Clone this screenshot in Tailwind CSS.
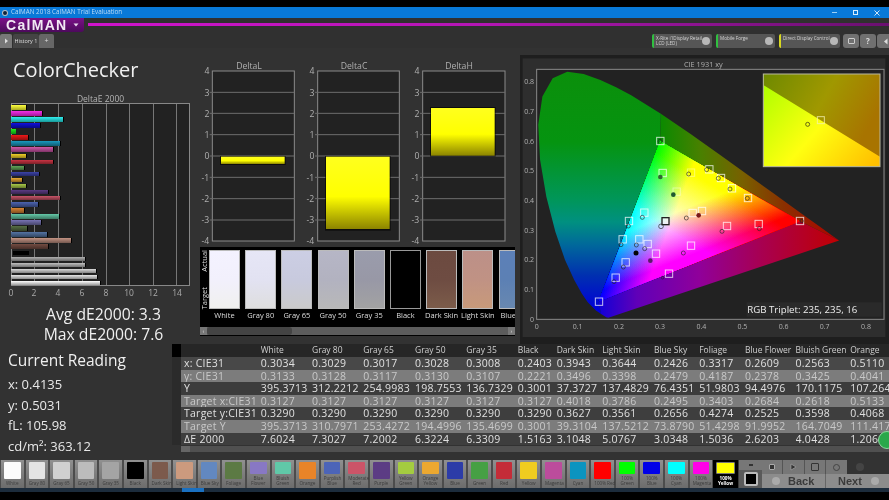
<!DOCTYPE html>
<html><head><meta charset="utf-8"><script src="https://cdn.jsdelivr.net/npm/@tailwindcss/browser@4"></script></head>
<body class="bg-black">
<div class="relative w-[889px] h-[500px] overflow-hidden flex flex-col bg-[#323232] font-['Open_Sans',sans-serif] text-white blur-[0.35px]">

<div class="h-[7px] bg-black shrink-0"></div>

<!-- title bar -->
<div class="h-[11px] shrink-0 bg-[#0879d8] flex items-center text-[#bcdcf6] text-[6.3px] leading-none">
  <div class="w-[6px] h-[6px] rounded-full bg-[#10243c] border border-white/70 ml-[2px] mr-[3px]"></div>
  <span>CalMAN 2018 CalMAN Trial Evaluation</span>
  <div class="ml-auto flex items-center gap-[16px] pr-[9px]">
    <div class="w-[5px] h-px bg-[#9cd0f5]"></div>
    <div class="w-[5px] h-[5px] border border-[#d8eefc]"></div>
    <svg width="6" height="6" viewBox="0 0 6 6"><path d="M0.5 0.5L5.5 5.5M5.5 0.5L0.5 5.5" stroke="#e4f2fc" stroke-width="0.9"/></svg>
  </div>
</div>

<!-- brand bar -->
<div class="h-[16px] shrink-0 bg-[#303030] flex items-start">
  <div class="w-[84px] h-[14px] bg-linear-to-b from-[#7c1088] to-[#4c0a5c] rounded-br-[3px] flex items-center pl-[6px] gap-[6px]">
    <span class="font-['Liberation_Sans'] font-bold text-[14px] leading-none tracking-[1.3px] text-[#f2e8f4]">CalMAN</span>
    <svg width="6" height="4" viewBox="0 0 6 4"><path d="M0.5 0.5H5.5L3 3.5Z" fill="#e8d8ec"/></svg>
  </div>
  <div class="ml-[4px] mt-[5px] flex-1 h-[3px] bg-linear-to-r from-[#d014cc] via-[#b416b4] to-[#6a1070]"></div>
</div>

<!-- tab bar -->
<div class="h-[14px] shrink-0 flex items-stretch bg-[#303030] relative">
  <div class="w-[12px] bg-[#777] rounded-t-[2px] flex items-center justify-center"><svg width="5" height="6" viewBox="0 0 5 6"><path d="M1 0.5L4 3L1 5.5Z" fill="#ddd"/></svg></div>
  <div class="w-[26px] ml-px bg-[#444] rounded-t-[2px] text-[5.5px] text-[#ddd] flex items-center justify-center">History 1</div>
  <div class="w-[15px] bg-[#666] rounded-t-[2px] text-[7px] text-[#ddd] flex items-center justify-center">+</div>
  <div class="ml-auto flex items-stretch gap-[4px] text-[4.6px] leading-[5.5px] text-[#d4d4d4]">
    <div class="w-[60px] bg-[#565656] border-l-2 border-[#30c040] rounded-[2px] flex items-center justify-between pl-[2px] pr-[2px]"><span>X-Rite i1Display Retail<br>LCD (LED)</span><span class="w-[8px] h-[8px] rounded-full bg-[#b8b8b8] shrink-0"></span></div>
    <div class="w-[59px] bg-[#565656] border-l-2 border-[#30c040] rounded-[2px] flex items-center justify-between pl-[2px] pr-[2px]"><span class="self-start pt-[2px]">Mobile Forge</span><span class="w-[8px] h-[8px] rounded-full bg-[#b8b8b8] shrink-0"></span></div>
    <div class="w-[61px] bg-[#565656] border-l-2 border-[#d8d820] rounded-[2px] flex items-center justify-between pl-[2px] pr-[2px]"><span class="self-start pt-[2px]">Direct Display Control</span><span class="w-[8px] h-[8px] rounded-full bg-[#b8b8b8] shrink-0"></span></div>
    <div class="flex gap-px -mr-[4px] -ml-[1px]">
      <div class="w-[16px] bg-[#707070] rounded-[3px] flex items-center justify-center"><span class="w-[7px] h-[6px] rounded-[1px] border border-[#ccc]"></span></div>
      <div class="w-[16px] bg-[#707070] rounded-[3px] flex items-center justify-center text-[8px] font-bold text-[#ddd]">?</div>
      <div class="w-[16px] bg-[#707070] rounded-[3px] flex items-center justify-center"><svg width="5" height="7" viewBox="0 0 5 7"><path d="M4.5 0.5V6.5L1 3.5Z" fill="#ddd"/></svg></div>
    </div>
  </div>
</div>

<!-- upper content -->
<div class="h-[296px] shrink-0 flex">
  <!-- left -->
  <div class="w-[195px] shrink-0 flex flex-col">
    <div class="pl-[13px] pt-[8px] h-[41px] text-[20px] leading-[28px] text-[#f0f0f0]">ColorChecker</div>
    <div class="text-center text-[8.5px] leading-[12px] h-[15px] pl-[6px] pt-[5px] text-[#b4b4b4]">DeltaE 2000</div>
    <div class="relative ml-[11px] w-[179px] h-[183px] bg-[#222] border-t border-r border-b border-[#888]">
      <div class="absolute top-0 bottom-0 left-[23px] w-px bg-[#777]"></div>
      <div class="absolute top-0 bottom-0 left-[47px] w-px bg-[#777]"></div>
      <div class="absolute top-0 bottom-0 left-[71px] w-px bg-[#777]"></div>
      <div class="absolute top-0 bottom-0 left-[95px] w-px bg-[#777]"></div>
      <div class="absolute top-0 bottom-0 left-[118px] w-px bg-[#777]"></div>
      <div class="absolute top-0 bottom-0 left-[142px] w-px bg-[#777]"></div>
      <div class="absolute top-0 bottom-0 left-[165px] w-px bg-[#777]"></div>
      <div class="absolute top-0 bottom-0 left-0 w-px bg-[#888]"></div>
      <div class="relative flex flex-col">
        <div class="h-[6.07px] flex items-center"><div class="w-[15px] h-[4.5px] bg-linear-to-b from-[#ffff40] to-[#a8a820] shadow-[1px_0_0_#000]"></div></div>
        <div class="h-[6.07px] flex items-center"><div class="w-[31px] h-[4.5px] bg-linear-to-b from-[#f430e8] to-[#a01898] shadow-[1px_0_0_#000]"></div></div>
        <div class="h-[6.07px] flex items-center"><div class="w-[52px] h-[4.5px] bg-linear-to-b from-[#30f0f0] to-[#189898] shadow-[1px_0_0_#000]"></div></div>
        <div class="h-[6.07px] flex items-center"><div class="w-[29px] h-[4.5px] bg-linear-to-b from-[#1010e0] to-[#080880] shadow-[1px_0_0_#000]"></div></div>
        <div class="h-[6.07px] flex items-center"><div class="w-[5px] h-[4.5px] bg-linear-to-b from-[#20f020] to-[#109010]"></div></div>
        <div class="h-[6.07px] flex items-center"><div class="w-[17px] h-[4.5px] bg-linear-to-b from-[#f01818] to-[#901010] shadow-[1px_0_0_#000]"></div></div>
        <div class="h-[6.07px] flex items-center"><div class="w-[49px] h-[4.5px] bg-linear-to-b from-[#1a9ac0] to-[#105a70] shadow-[1px_0_0_#000]"></div></div>
        <div class="h-[6.07px] flex items-center"><div class="w-[42px] h-[4.5px] bg-linear-to-b from-[#d058a8] to-[#803468] shadow-[1px_0_0_#000]"></div></div>
        <div class="h-[6.07px] flex items-center"><div class="w-[15px] h-[4.5px] bg-linear-to-b from-[#f0d028] to-[#988418] shadow-[1px_0_0_#000]"></div></div>
        <div class="h-[6.07px] flex items-center"><div class="w-[42px] h-[4.5px] bg-linear-to-b from-[#c83444] to-[#7c2028] shadow-[1px_0_0_#000]"></div></div>
        <div class="h-[6.07px] flex items-center"><div class="w-[13px] h-[4.5px] bg-linear-to-b from-[#60a458] to-[#3a6434] shadow-[1px_0_0_#000]"></div></div>
        <div class="h-[6.07px] flex items-center"><div class="w-[28px] h-[4.5px] bg-linear-to-b from-[#3c44a8] to-[#242868] shadow-[1px_0_0_#000]"></div></div>
        <div class="h-[6.07px] flex items-center"><div class="w-[11px] h-[4.5px] bg-linear-to-b from-[#e8a834] to-[#8c6420] shadow-[1px_0_0_#000]"></div></div>
        <div class="h-[6.07px] flex items-center"><div class="w-[15px] h-[4.5px] bg-linear-to-b from-[#a8c848] to-[#687c2c] shadow-[1px_0_0_#000]"></div></div>
        <div class="h-[6.07px] flex items-center"><div class="w-[37px] h-[4.5px] bg-linear-to-b from-[#5c3c84] to-[#382450] shadow-[1px_0_0_#000]"></div></div>
        <div class="h-[6.07px] flex items-center"><div class="w-[49px] h-[4.5px] bg-linear-to-b from-[#c85468] to-[#78323e] shadow-[1px_0_0_#000]"></div></div>
        <div class="h-[6.07px] flex items-center"><div class="w-[27px] h-[4.5px] bg-linear-to-b from-[#4c64b0] to-[#2e3c6a] shadow-[1px_0_0_#000]"></div></div>
        <div class="h-[6.07px] flex items-center"><div class="w-[13px] h-[4.5px] bg-linear-to-b from-[#d88434] to-[#84501f] shadow-[1px_0_0_#000]"></div></div>
        <div class="h-[6.07px] flex items-center"><div class="w-[48px] h-[4.5px] bg-linear-to-b from-[#64c8a8] to-[#3c7864] shadow-[1px_0_0_#000]"></div></div>
        <div class="h-[6.07px] flex items-center"><div class="w-[30px] h-[4.5px] bg-linear-to-b from-[#7874b4] to-[#48466c] shadow-[1px_0_0_#000]"></div></div>
        <div class="h-[6.07px] flex items-center"><div class="w-[16px] h-[4.5px] bg-linear-to-b from-[#566e44] to-[#344228] shadow-[1px_0_0_#000]"></div></div>
        <div class="h-[6.07px] flex items-center"><div class="w-[36px] h-[4.5px] bg-linear-to-b from-[#5474a4] to-[#324662] shadow-[1px_0_0_#000]"></div></div>
        <div class="h-[6.07px] flex items-center"><div class="w-[60px] h-[4.5px] bg-linear-to-b from-[#c49484] to-[#765950] shadow-[1px_0_0_#000]"></div></div>
        <div class="h-[6.07px] flex items-center"><div class="w-[37px] h-[4.5px] bg-linear-to-b from-[#744c42] to-[#462e28] shadow-[1px_0_0_#000]"></div></div>
        <div class="h-[6.07px] flex items-center"><div class="ml-[2px] w-[16px] h-[4.5px] bg-black"></div></div>
        <div class="h-[6.07px] flex items-center"><div class="w-[74px] h-[4.5px] bg-linear-to-b from-[#b0b0b0] to-[#6a6a6a] shadow-[1px_0_0_#000]"></div></div>
        <div class="h-[6.07px] flex items-center"><div class="w-[74px] h-[4.5px] bg-linear-to-b from-[#c0c0c0] to-[#747474] shadow-[1px_0_0_#000]"></div></div>
        <div class="h-[6.07px] flex items-center"><div class="w-[85px] h-[4.5px] bg-linear-to-b from-[#dadada] to-[#848484] shadow-[1px_0_0_#000]"></div></div>
        <div class="h-[6.07px] flex items-center"><div class="w-[86px] h-[4.5px] bg-linear-to-b from-[#e8e8e8] to-[#8c8c8c] shadow-[1px_0_0_#000]"></div></div>
        <div class="h-[6.07px] flex items-center"><div class="w-[89px] h-[4.5px] bg-linear-to-b from-[#ffffff] to-[#a0a0a0] shadow-[1px_0_0_#000]"></div></div>
      </div>
    </div>
    <div class="relative ml-[11px] h-[12px] text-[8.5px] leading-[12px] text-[#aaa] mt-[1px]">
      <span class="absolute left-0 -translate-x-1/2">0</span>
      <span class="absolute left-[23px] -translate-x-1/2">2</span>
      <span class="absolute left-[47px] -translate-x-1/2">4</span>
      <span class="absolute left-[71px] -translate-x-1/2">6</span>
      <span class="absolute left-[95px] -translate-x-1/2">8</span>
      <span class="absolute left-[118px] -translate-x-1/2">10</span>
      <span class="absolute left-[142px] -translate-x-1/2">12</span>
      <span class="absolute left-[166px] -translate-x-1/2">14</span>
    </div>
    <div class="text-center text-[15.7px] leading-[20px] text-[#f0f0f0] pl-[12px] pt-[5px]">Avg dE2000: 3.3</div>
    <div class="text-center text-[15.7px] leading-[20px] text-[#f0f0f0] pl-[12px]">Max dE2000: 7.6</div>
  </div>

  <!-- center -->
  <div class="w-[325px] shrink-0 flex flex-col">
    <svg class="mt-[12px] block shrink-0" width="330" height="190" viewBox="0 0 990 570">
      <defs>
        <linearGradient id="yb" x1="0" y1="0" x2="0" y2="1"><stop offset="0" stop-color="#ffff1e"/><stop offset="0.55" stop-color="#ffff00"/><stop offset="1" stop-color="#8c8400"/></linearGradient>
      </defs>
      <g font-size="26" fill="#b0b0b0" text-anchor="end">
        <text x="162" y="27" text-anchor="middle">DeltaL</text><text x="477" y="27" text-anchor="middle">DeltaC</text><text x="792" y="27" text-anchor="middle">DeltaH</text>
        <text x="43" y="43">4</text><text x="43" y="107">3</text><text x="43" y="170">2</text><text x="43" y="234">1</text><text x="43" y="298">0</text><text x="43" y="362">-1</text><text x="43" y="426">-2</text><text x="43" y="490">-3</text><text x="43" y="553">-4</text>
        <text x="358" y="43">4</text><text x="358" y="107">3</text><text x="358" y="170">2</text><text x="358" y="234">1</text><text x="358" y="298">0</text><text x="358" y="362">-1</text><text x="358" y="426">-2</text><text x="358" y="490">-3</text><text x="358" y="553">-4</text>
        <text x="673" y="43">4</text><text x="673" y="107">3</text><text x="673" y="170">2</text><text x="673" y="234">1</text><text x="673" y="298">0</text><text x="673" y="362">-1</text><text x="673" y="426">-2</text><text x="673" y="490">-3</text><text x="673" y="553">-4</text>
      </g>
      <g fill="#222" stroke="#8a8a8a" stroke-width="3">
        <rect x="52" y="33" width="246" height="510"/><rect x="368" y="33" width="245" height="510"/><rect x="683" y="33" width="247" height="510"/>
      </g>
      <path stroke="#6e6e6e" stroke-width="3" d="M44 97H298M44 160H298M44 224H298M44 288H298M44 352H298M44 416H298M44 480H298M360 97H613M360 160H613M360 224H613M360 288H613M360 352H613M360 416H613M360 480H613M675 97H930M675 160H930M675 224H930M675 288H930M675 352H930M675 416H930M675 480H930"/>
      <rect x="75" y="288" width="197" height="27" fill="#000" fill-opacity="0.6"/><rect x="78" y="290" width="191" height="22" fill="url(#yb)"/>
      <rect x="390" y="288" width="197" height="224" fill="#000" fill-opacity="0.6"/><rect x="393" y="290" width="191" height="217" fill="url(#yb)"/>
      <rect x="705" y="141" width="197" height="149" fill="#000" fill-opacity="0.6"/><rect x="708" y="144" width="191" height="143" fill="url(#yb)"/>
    </svg>
    <!-- swatches -->
    <div class="-mt-[3px] ml-[5px] w-[315px] h-[89px] bg-black relative overflow-hidden flex flex-col">
      <div class="flex h-[80px] pt-[3px]">
        <div class="w-[9px] shrink-0 h-[59px] flex flex-col justify-between items-center text-[7.5px] text-[#ddd] leading-none">
          <span class="[writing-mode:vertical-rl] rotate-180 ml-[1px]">Actual</span>
          <span class="[writing-mode:vertical-rl] rotate-180 ml-[1px]">Target</span>
        </div>
        <div class="flex gap-[5.2px] text-[7.5px] leading-[13px] text-[#ddd] text-center whitespace-nowrap">
          <div class="w-[31px]"><div class="h-[59px] border border-[#bbb] bg-linear-to-b from-[#f4f2ff] via-[#f2f0fc] to-[#f0f0ee]"></div><div class="flex justify-center">White</div></div>
          <div class="w-[31px]"><div class="h-[59px] border border-[#bbb] bg-linear-to-b from-[#e6e6f6] via-[#e2e2f2] to-[#dedede]"></div><div class="flex justify-center">Gray 80</div></div>
          <div class="w-[31px]"><div class="h-[59px] border border-[#bbb] bg-linear-to-b from-[#cccee4] via-[#c8cade] to-[#cacaca]"></div><div class="flex justify-center">Gray 65</div></div>
          <div class="w-[31px]"><div class="h-[59px] border border-[#bbb] bg-linear-to-b from-[#b6b6c6] via-[#b2b2c0] to-[#b8b8b8]"></div><div class="flex justify-center">Gray 50</div></div>
          <div class="w-[31px]"><div class="h-[59px] border border-[#bbb] bg-linear-to-b from-[#9a9cac] via-[#9898a6] to-[#a2a2a2]"></div><div class="flex justify-center">Gray 35</div></div>
          <div class="w-[31px]"><div class="h-[59px] border border-[#999] bg-black"></div><div class="flex justify-center">Black</div></div>
          <div class="w-[31px]"><div class="h-[59px] border border-[#bbb] bg-linear-to-b from-[#6c4a40] via-[#6e4c42] to-[#7c5c4a]"></div><div class="flex justify-center">Dark Skin</div></div>
          <div class="w-[31px]"><div class="h-[59px] border border-[#bbb] bg-linear-to-b from-[#bc9088] via-[#c09284] to-[#c89a7a]"></div><div class="flex justify-center">Light Skin</div></div>
          <div class="w-[31px]"><div class="h-[59px] border border-[#bbb] bg-linear-to-b from-[#5c80b8] via-[#5c80b4] to-[#6888b0]"></div><div class="flex justify-start pl-[2px]">Blue</div></div>
        </div>
      </div>
      <div class="absolute left-0 right-0 bottom-[1px] h-[8px] bg-[#5c5c5c] flex items-center">
        <div class="w-[7px] h-full bg-[#777] text-[6px] leading-[8px] text-center text-[#ddd]">‹</div>
        <div class="w-[85px] h-full bg-[#444] rounded-[3px]"></div>
        <div class="ml-auto w-[7px] h-full bg-[#777] text-[6px] leading-[8px] text-center text-[#ddd]">›</div>
      </div>
    </div>
  </div>

  <!-- CIE -->
  <div class="flex-1 min-w-0">
    <svg class="mt-[7px] block" width="369" height="290" viewBox="0 0 1107 870">
      <defs>
        <linearGradient id="lf" x1="0" y1="1" x2="0" y2="0">
          <stop offset="0" stop-color="#0b8f0b"/><stop offset="0.29" stop-color="#059410"/><stop offset="0.53" stop-color="#00965a"/><stop offset="0.62" stop-color="#009080"/><stop offset="0.71" stop-color="#006a9a"/><stop offset="0.84" stop-color="#0030b0"/><stop offset="0.98" stop-color="#0000d8"/>
        </linearGradient>
        <linearGradient id="tr" x1="0" y1="0" x2="1" y2="0">
          <stop offset="0" stop-color="#0a8a00"/><stop offset="0.23" stop-color="#4a8000"/><stop offset="0.46" stop-color="#786000"/><stop offset="0.69" stop-color="#8a3000"/><stop offset="1" stop-color="#b00000"/>
        </linearGradient>
        <linearGradient id="bt" x1="0" y1="0" x2="1" y2="0">
          <stop offset="0" stop-color="#1000d8"/><stop offset="0.16" stop-color="#6000b8"/><stop offset="0.42" stop-color="#90009a"/><stop offset="0.68" stop-color="#a80050"/><stop offset="1" stop-color="#c00000"/>
        </linearGradient>
        <linearGradient id="gr" gradientUnits="userSpaceOnUse" x1="840" y1="499" x2="393.8" y2="327.3"><stop offset="0" stop-color="#f00"/><stop offset="1" stop-color="#000"/></linearGradient>
        <linearGradient id="gg" gradientUnits="userSpaceOnUse" x1="420.5" y1="258" x2="560.8" y2="610.2"><stop offset="0" stop-color="#0f0"/><stop offset="1" stop-color="#000"/></linearGradient>
        <linearGradient id="gb" gradientUnits="userSpaceOnUse" x1="235" y1="740" x2="489.2" y2="297.5"><stop offset="0" stop-color="#00f"/><stop offset="1" stop-color="#000"/></linearGradient>
        <filter id="boost" color-interpolation-filters="sRGB" x="0" y="0" width="100%" height="100%">
          <feComponentTransfer><feFuncR type="linear" slope="4" intercept="0"/><feFuncG type="linear" slope="2.8" intercept="-0.2"/><feFuncB type="linear" slope="2.8" intercept="-0.2"/></feComponentTransfer>
        </filter>
        <linearGradient id="inA" x1="0" y1="0" x2="1" y2="0.4"><stop offset="0" stop-color="#6e8a00"/><stop offset="0.55" stop-color="#a09800"/><stop offset="1" stop-color="#a87400"/></linearGradient>
        <linearGradient id="inB" x1="0" y1="0.2" x2="1" y2="0.9"><stop offset="0" stop-color="#b4ff00"/><stop offset="0.5" stop-color="#ffff10"/><stop offset="1" stop-color="#ffc000"/></linearGradient>
      </defs>
      <rect width="1107" height="870" fill="#1e1e1e"/>
      <rect x="8" y="10" width="1088" height="836" fill="#2e2e2e"/>
      <rect x="50" y="43" width="1042" height="750" fill="#222" stroke="#8a8a8a" stroke-width="3"/>
      <g transform="translate(50 793) scale(1235 -891)">
        <polygon fill="url(#lf)" points=".15,.06 .1566,.0177 .144,.0297 .1241,.0578 .1096,.0868 .0913,.1327 .0687,.2007 .0454,.295 .0235,.4127 .0082,.5384 .0039,.6548 .0139,.7502 .0389,.812 .0743,.8338 .1142,.8262 .1547,.8059 .1929,.7816 .2296,.7543 .3016,.6923 .3,.6"/>
        <polygon fill="url(#tr)" points=".3,.6 .3016,.6923 .3731,.6245 .4441,.5547 .5125,.4866 .5752,.4242 .627,.3725 .6658,.334 .6915,.3083 .719,.2809 .7347,.2653 .64,.33"/>
        <polygon fill="url(#bt)" points=".15,.06 .1566,.0177 .1689,.0069 .1741,.005 .7347,.2653 .64,.33"/>
      </g>
      <g filter="url(#boost)" class="isolate">
        <polygon points="840,499 420.5,258 235,740" fill="#000"/>
        <polygon class="mix-blend-screen" points="840,499 420.5,258 235,740" fill="url(#gr)"/>
        <polygon class="mix-blend-screen" points="840,499 420.5,258 235,740" fill="url(#gg)"/>
        <polygon class="mix-blend-screen" points="840,499 420.5,258 235,740" fill="url(#gb)"/>
      </g>
      <!-- inset -->
      <rect x="730" y="57" width="350" height="278" fill="url(#inB)"/>
      <polygon points="730,57 1080,57 1080,305 730,90" fill="url(#inA)"/>
      <rect x="730" y="57" width="350" height="278" fill="none" stroke="#b8b8a0" stroke-width="3"/>
      <rect x="892" y="185" width="21" height="21" fill="none" stroke="#f4f0b0" stroke-opacity="0.8" stroke-width="3"/>
      <circle cx="863" cy="208" r="6" fill="none" stroke="#4a4a10" stroke-width="2.5"/>
      <!-- targets -->
      <g fill="none" stroke="#fff" stroke-width="3" stroke-opacity="0.75">
        <rect x="410" y="247" width="22" height="22"/><rect x="417" y="343" width="22" height="22"/><rect x="502" y="342" width="22" height="22" stroke-opacity="0.4"/><rect x="557" y="332" width="22" height="22"/><rect x="592" y="358" width="22" height="22"/><rect x="625" y="389" width="22" height="22"/><rect x="673" y="418" width="22" height="22"/><rect x="459" y="399" width="22" height="22" stroke-opacity="0.4"/><rect x="535" y="457" width="22" height="22"/><rect x="507" y="463" width="22" height="22"/><rect x="362" y="462" width="22" height="22"/><rect x="316" y="487" width="22" height="22"/><rect x="610" y="502" width="22" height="22"/><rect x="705" y="496" width="22" height="22"/><rect x="829" y="487" width="22" height="22"/><rect x="297" y="542" width="22" height="22"/><rect x="347" y="542" width="22" height="22"/><rect x="372" y="556" width="22" height="22"/><rect x="502" y="561" width="22" height="22"/><rect x="397" y="585" width="22" height="22"/><rect x="306" y="611" width="22" height="22"/><rect x="436" y="645" width="22" height="22"/><rect x="276" y="657" width="22" height="22"/><rect x="226" y="729" width="22" height="22"/>
      </g>
      <rect x="426" y="488" width="21" height="21" fill="#fff" fill-opacity="0.5" stroke="#222" stroke-width="4"/>
      <!-- actual -->
      <g fill="none" stroke="#222" stroke-width="2.5" stroke-opacity="0.75">
        <circle cx="420" cy="259" r="6"/><circle cx="506" cy="357" r="6"/><circle cx="560" cy="344" r="6"/><circle cx="595" cy="370" r="6"/><circle cx="630" cy="402" r="6"/><circle cx="682" cy="430" r="6"/><circle cx="499" cy="489" r="6"/><circle cx="367" cy="487" r="6"/><circle cx="325" cy="513" r="6"/><circle cx="423" cy="514" r="7"/><circle cx="606" cy="529" r="6"/><circle cx="718" cy="521" r="6"/><circle cx="845" cy="498" r="5"/><circle cx="303" cy="569" r="6"/><circle cx="349" cy="570" r="6"/><circle cx="374" cy="581" r="6"/><circle cx="490" cy="594" r="6"/><circle cx="310" cy="636" r="6"/><circle cx="428" cy="668" r="4"/><circle cx="282" cy="680" r="6"/>
      </g>
      <circle cx="421" cy="366" r="7" fill="#2f6a2f"/><circle cx="460" cy="419" r="7" fill="#1f5a2f"/><circle cx="536" cy="481" r="7" fill="#7a1a1a"/><circle cx="348" cy="594" r="7.5" fill="#050505"/><circle cx="391" cy="617" r="7" fill="#5a1a6a"/>
      <!-- triplet -->
      <rect x="680" y="742" width="405" height="43" fill="#2a2a2a"/>
      <text x="682" y="773" font-size="29" fill="#eee">RGB Triplet: 235, 235, 16</text>
      <!-- axes -->
      <text x="550" y="37" font-size="22" fill="#b0b0b0" text-anchor="middle">CIE 1931 xy</text>
      <g font-size="21" fill="#b0b0b0" text-anchor="middle">
        <text x="50" y="822">0</text><text x="173" y="822">0.1</text><text x="297" y="822">0.2</text><text x="420" y="822">0.3</text><text x="544" y="822">0.4</text><text x="667" y="822">0.5</text><text x="791" y="822">0.6</text><text x="914" y="822">0.7</text><text x="1038" y="822">0.8</text>
      </g>
      <g font-size="21" fill="#b0b0b0" text-anchor="end">
        <text x="42" y="88">0.8</text><text x="42" y="177">0.7</text><text x="42" y="266">0.6</text><text x="42" y="355">0.5</text><text x="42" y="444">0.4</text><text x="42" y="533">0.3</text><text x="42" y="622">0.2</text><text x="42" y="711">0.1</text><text x="42" y="800">0</text>
      </g>
    </svg>
  </div>
</div>

<!-- lower content -->
<div class="h-[116px] shrink-0 flex">
  <div class="w-[172px] shrink-0 pl-[8px] text-[#f0f0f0]">
    <div class="text-[15.5px] leading-[22px] pt-[5px] h-[30px]">Current Reading</div>
    <div class="text-[13px] leading-[20.5px] text-[#e8e8e8]">
      <div>x: 0.4135</div>
      <div>y: 0.5031</div>
      <div>fL: 105.98</div>
      <div>cd/m²: 363.12</div>
    </div>
  </div>
  <div class="w-[9px] shrink-0 flex flex-col">
    <div class="h-[13px] bg-black"></div>
    <div class="h-[88px] bg-[#2b2b2b]"></div>
  </div>
  <div class="flex-1 min-w-0 overflow-hidden">
    <table class="table-fixed w-[708px] border-collapse text-[10.5px] tracking-[0.25px] text-[#e0e0e0]">
      <colgroup><col class="w-[79.7px]"><col class="w-[51.3px]"><col class="w-[51.3px]"><col class="w-[51.7px]"><col class="w-[51.3px]"><col class="w-[51.4px]"><col class="w-[39px]"><col class="w-[45.6px]"><col class="w-[51.7px]"><col class="w-[45.3px]"><col class="w-[45.7px]"><col class="w-[50.7px]"><col class="w-[54.6px]"><col class="w-[38.7px]"></colgroup>
      <thead>
        <tr class="h-[13px] bg-[#262626] text-[8.5px] tracking-normal text-[#cfcfcf] text-left font-normal [&>th]:font-normal [&>th]:p-0 [&>th]:whitespace-nowrap [&>th]:overflow-hidden [&>th]:leading-none">
          <th></th><th>White</th><th>Gray 80</th><th>Gray 65</th><th>Gray 50</th><th>Gray 35</th><th>Black</th><th>Dark Skin</th><th>Light Skin</th><th>Blue Sky</th><th>Foliage</th><th>Blue Flower</th><th>Bluish Green</th><th>Orange</th>
        </tr>
      </thead>
      <tbody class="[&_td]:p-0 [&_td]:leading-none [&_td]:whitespace-nowrap [&_td]:overflow-hidden [&_tr]:h-[12.6px] [&_td:first-child]:pl-[3px]">
        <tr class="bg-[#484848]"><td>x: CIE31</td><td>0.3034</td><td>0.3029</td><td>0.3017</td><td>0.3028</td><td>0.3008</td><td>0.2403</td><td>0.3943</td><td>0.3644</td><td>0.2426</td><td>0.3317</td><td>0.2609</td><td>0.2563</td><td>0.5110</td></tr>
        <tr class="bg-[#7c7c7c] text-[#c8c8c8]"><td>y: CIE31</td><td>0.3133</td><td>0.3128</td><td>0.3117</td><td>0.3130</td><td>0.3107</td><td>0.2221</td><td>0.3496</td><td>0.3398</td><td>0.2479</td><td>0.4187</td><td>0.2378</td><td>0.3425</td><td>0.4041</td></tr>
        <tr class="bg-[#3c3c3c]"><td>Y</td><td>395.3713</td><td>312.2212</td><td>254.9983</td><td>198.7553</td><td>136.7329</td><td>0.3001</td><td>37.3727</td><td>137.4829</td><td>76.4351</td><td>51.9803</td><td>94.4976</td><td>170.1175</td><td>107.264</td></tr>
        <tr class="bg-[#7c7c7c] text-[#c8c8c8]"><td>Target x:CIE31</td><td>0.3127</td><td>0.3127</td><td>0.3127</td><td>0.3127</td><td>0.3127</td><td>0.3127</td><td>0.4018</td><td>0.3786</td><td>0.2495</td><td>0.3403</td><td>0.2684</td><td>0.2618</td><td>0.5133</td></tr>
        <tr class="bg-[#3e3e3e]"><td>Target y:CIE31</td><td>0.3290</td><td>0.3290</td><td>0.3290</td><td>0.3290</td><td>0.3290</td><td>0.3290</td><td>0.3627</td><td>0.3561</td><td>0.2656</td><td>0.4274</td><td>0.2525</td><td>0.3598</td><td>0.4068</td></tr>
        <tr class="bg-[#7c7c7c] text-[#c8c8c8]"><td>Target Y</td><td>395.3713</td><td>310.7971</td><td>253.4272</td><td>194.4996</td><td>135.4699</td><td>0.3001</td><td>39.3104</td><td>137.5212</td><td>73.8790</td><td>51.4298</td><td>91.9952</td><td>164.7049</td><td>111.417</td></tr>
        <tr class="bg-[#3e3e3e]"><td>ΔE 2000</td><td>7.6024</td><td>7.3027</td><td>7.2002</td><td>6.3224</td><td>6.3309</td><td>1.5163</td><td>3.1048</td><td>5.0767</td><td>3.0348</td><td>1.5036</td><td>2.6203</td><td>4.0428</td><td>1.2066</td></tr>
      </tbody>
    </table>
    <div class="h-[6px] mt-px bg-[#444] flex"><div class="w-[9px] bg-[#666]"></div><div class="flex-1 bg-[#505050]"></div></div>
  </div>
</div>

<div class="absolute left-[878px] top-[431px] w-[18px] h-[18px] rounded-full bg-[#2aa84a] border border-[#8fd8a0]"></div>

<!-- bottom strip -->
<div class="h-[28px] shrink-0 flex bg-[#3a3a3a]">
  <div class="w-[739px] shrink-0 flex text-[4.6px] leading-[5px] text-[#3c3c3c] text-center">
    <div class="w-[24.6px] shrink-0 px-[3px] pt-[2px] border-x border-[#4c4c4c] bg-linear-to-b from-[#909090] to-[#6c6c6c]"><div class="h-[17px] bg-[#fbfbfb] rounded-[1px]"></div><div class="mt-[2px] whitespace-nowrap">White</div></div>
    <div class="w-[24.6px] shrink-0 px-[3px] pt-[2px] border-x border-[#4c4c4c] bg-linear-to-b from-[#909090] to-[#6c6c6c]"><div class="h-[17px] bg-[#e4e4e4] rounded-[1px]"></div><div class="mt-[2px] whitespace-nowrap">Gray 80</div></div>
    <div class="w-[24.6px] shrink-0 px-[3px] pt-[2px] border-x border-[#4c4c4c] bg-linear-to-b from-[#909090] to-[#6c6c6c]"><div class="h-[17px] bg-[#d0d0d0] rounded-[1px]"></div><div class="mt-[2px] whitespace-nowrap">Gray 65</div></div>
    <div class="w-[24.6px] shrink-0 px-[3px] pt-[2px] border-x border-[#4c4c4c] bg-linear-to-b from-[#909090] to-[#6c6c6c]"><div class="h-[17px] bg-[#bcbcbc] rounded-[1px]"></div><div class="mt-[2px] whitespace-nowrap">Gray 50</div></div>
    <div class="w-[24.6px] shrink-0 px-[3px] pt-[2px] border-x border-[#4c4c4c] bg-linear-to-b from-[#909090] to-[#6c6c6c]"><div class="h-[17px] bg-[#a4a4a4] rounded-[1px]"></div><div class="mt-[2px] whitespace-nowrap">Gray 35</div></div>
    <div class="w-[24.6px] shrink-0 px-[3px] pt-[2px] border-x border-[#4c4c4c] bg-linear-to-b from-[#909090] to-[#6c6c6c]"><div class="h-[17px] bg-[#000] rounded-[1px]"></div><div class="mt-[2px] whitespace-nowrap">Black</div></div>
    <div class="w-[24.6px] shrink-0 px-[3px] pt-[2px] border-x border-[#4c4c4c] bg-linear-to-b from-[#909090] to-[#6c6c6c]"><div class="h-[17px] bg-[#7c5a4c] rounded-[1px]"></div><div class="mt-[2px] whitespace-nowrap">Dark Skin</div></div>
    <div class="w-[24.6px] shrink-0 px-[3px] pt-[2px] border-x border-[#4c4c4c] bg-linear-to-b from-[#909090] to-[#6c6c6c]"><div class="h-[17px] bg-[#cc9a7e] rounded-[1px]"></div><div class="mt-[2px] whitespace-nowrap">Light Skin</div></div>
    <div class="w-[24.6px] shrink-0 px-[3px] pt-[2px] border-x border-[#4c4c4c] bg-linear-to-b from-[#909090] to-[#6c6c6c]"><div class="h-[17px] bg-[#6288c0] rounded-[1px]"></div><div class="mt-[2px] whitespace-nowrap">Blue Sky</div></div>
    <div class="w-[24.6px] shrink-0 px-[3px] pt-[2px] border-x border-[#4c4c4c] bg-linear-to-b from-[#909090] to-[#6c6c6c]"><div class="h-[17px] bg-[#5c7a44] rounded-[1px]"></div><div class="mt-[2px] whitespace-nowrap">Foliage</div></div>
    <div class="w-[24.6px] shrink-0 px-[3px] pt-[2px] border-x border-[#4c4c4c] bg-linear-to-b from-[#909090] to-[#6c6c6c]"><div class="h-[12px] bg-[#8878c4] rounded-[1px]"></div><div class="mt-[2px]">Blue Flower</div></div>
    <div class="w-[24.6px] shrink-0 px-[3px] pt-[2px] border-x border-[#4c4c4c] bg-linear-to-b from-[#909090] to-[#6c6c6c]"><div class="h-[12px] bg-[#60c8a8] rounded-[1px]"></div><div class="mt-[2px]">Bluish Green</div></div>
    <div class="w-[24.6px] shrink-0 px-[3px] pt-[2px] border-x border-[#4c4c4c] bg-linear-to-b from-[#909090] to-[#6c6c6c]"><div class="h-[17px] bg-[#e88428] rounded-[1px]"></div><div class="mt-[2px] whitespace-nowrap">Orange</div></div>
    <div class="w-[24.6px] shrink-0 px-[3px] pt-[2px] border-x border-[#4c4c4c] bg-linear-to-b from-[#909090] to-[#6c6c6c]"><div class="h-[12px] bg-[#4c64b8] rounded-[1px]"></div><div class="mt-[2px]">Purplish Blue</div></div>
    <div class="w-[24.6px] shrink-0 px-[3px] pt-[2px] border-x border-[#4c4c4c] bg-linear-to-b from-[#909090] to-[#6c6c6c]"><div class="h-[12px] bg-[#cc5468] rounded-[1px]"></div><div class="mt-[2px]">Moderate Red</div></div>
    <div class="w-[24.6px] shrink-0 px-[3px] pt-[2px] border-x border-[#4c4c4c] bg-linear-to-b from-[#909090] to-[#6c6c6c]"><div class="h-[17px] bg-[#5c3c84] rounded-[1px]"></div><div class="mt-[2px] whitespace-nowrap">Purple</div></div>
    <div class="w-[24.6px] shrink-0 px-[3px] pt-[2px] border-x border-[#4c4c4c] bg-linear-to-b from-[#909090] to-[#6c6c6c]"><div class="h-[12px] bg-[#a4cc40] rounded-[1px]"></div><div class="mt-[2px]">Yellow Green</div></div>
    <div class="w-[24.6px] shrink-0 px-[3px] pt-[2px] border-x border-[#4c4c4c] bg-linear-to-b from-[#909090] to-[#6c6c6c]"><div class="h-[12px] bg-[#eca830] rounded-[1px]"></div><div class="mt-[2px]">Orange Yellow</div></div>
    <div class="w-[24.6px] shrink-0 px-[3px] pt-[2px] border-x border-[#4c4c4c] bg-linear-to-b from-[#909090] to-[#6c6c6c]"><div class="h-[17px] bg-[#2c3ca8] rounded-[1px]"></div><div class="mt-[2px] whitespace-nowrap">Blue</div></div>
    <div class="w-[24.6px] shrink-0 px-[3px] pt-[2px] border-x border-[#4c4c4c] bg-linear-to-b from-[#909090] to-[#6c6c6c]"><div class="h-[17px] bg-[#46a044] rounded-[1px]"></div><div class="mt-[2px] whitespace-nowrap">Green</div></div>
    <div class="w-[24.6px] shrink-0 px-[3px] pt-[2px] border-x border-[#4c4c4c] bg-linear-to-b from-[#909090] to-[#6c6c6c]"><div class="h-[17px] bg-[#c42c38] rounded-[1px]"></div><div class="mt-[2px] whitespace-nowrap">Red</div></div>
    <div class="w-[24.6px] shrink-0 px-[3px] pt-[2px] border-x border-[#4c4c4c] bg-linear-to-b from-[#909090] to-[#6c6c6c]"><div class="h-[17px] bg-[#f0cc20] rounded-[1px]"></div><div class="mt-[2px] whitespace-nowrap">Yellow</div></div>
    <div class="w-[24.6px] shrink-0 px-[3px] pt-[2px] border-x border-[#4c4c4c] bg-linear-to-b from-[#909090] to-[#6c6c6c]"><div class="h-[17px] bg-[#bc4c9c] rounded-[1px]"></div><div class="mt-[2px] whitespace-nowrap">Magenta</div></div>
    <div class="w-[24.6px] shrink-0 px-[3px] pt-[2px] border-x border-[#4c4c4c] bg-linear-to-b from-[#909090] to-[#6c6c6c]"><div class="h-[17px] bg-[#0c94c0] rounded-[1px]"></div><div class="mt-[2px] whitespace-nowrap">Cyan</div></div>
    <div class="w-[24.6px] shrink-0 px-[3px] pt-[2px] border-x border-[#4c4c4c] bg-linear-to-b from-[#909090] to-[#6c6c6c]"><div class="h-[17px] bg-[#ff0000] rounded-[1px]"></div><div class="mt-[2px] whitespace-nowrap">100% Red</div></div>
    <div class="w-[24.6px] shrink-0 px-[3px] pt-[2px] border-x border-[#4c4c4c] bg-linear-to-b from-[#909090] to-[#6c6c6c]"><div class="h-[12px] bg-[#00ff00] rounded-[1px]"></div><div class="mt-[2px]">100% Green</div></div>
    <div class="w-[24.6px] shrink-0 px-[3px] pt-[2px] border-x border-[#4c4c4c] bg-linear-to-b from-[#909090] to-[#6c6c6c]"><div class="h-[12px] bg-[#0000e8] rounded-[1px]"></div><div class="mt-[2px]">100% Blue</div></div>
    <div class="w-[24.6px] shrink-0 px-[3px] pt-[2px] border-x border-[#4c4c4c] bg-linear-to-b from-[#909090] to-[#6c6c6c]"><div class="h-[12px] bg-[#00ffff] rounded-[1px]"></div><div class="mt-[2px]">100% Cyan</div></div>
    <div class="w-[24.6px] shrink-0 px-[3px] pt-[2px] border-x border-[#4c4c4c] bg-linear-to-b from-[#909090] to-[#6c6c6c]"><div class="h-[12px] bg-[#ff00e8] rounded-[1px]"></div><div class="mt-[2px]">100% Magenta</div></div>
    <div class="w-[24.6px] shrink-0 px-[3px] pt-[2px] bg-black text-white font-bold"><div class="h-[12px] bg-[#ffff00] rounded-[1px] border border-[#777]"></div><div class="mt-[2px]">100% Yellow</div></div>
  </div>
  <!-- transport -->
  <div class="flex-1 min-w-0 flex">
    <div class="w-[23px] shrink-0 flex flex-col bg-[#5c5c5c]">
      <div class="h-[10px] bg-[#777] flex items-center justify-center"><span class="w-[4px] h-[2px] bg-[#333]"></span></div>
      <div class="flex-1 flex items-center justify-center bg-[#5a5a5a]"><span class="w-[14px] h-[14px] border-2 border-[#bbb] bg-black rounded-[2px] flex"></span></div>
    </div>
    <div class="flex-1 min-w-0 flex flex-col">
      <div class="h-[14px] flex bg-[#333]">
        <div class="w-[21px] bg-[#777] border-r border-[#555] flex items-center justify-center"><span class="w-[6px] h-[6px] rounded-[1px] bg-[#333] border border-[#aaa]"></span></div>
        <div class="w-[22px] bg-[#777] border-r border-[#555] flex items-center justify-center"><svg width="7" height="8" viewBox="0 0 7 8"><path d="M1 1L6 4L1 7Z" fill="#333" stroke="#aaa" stroke-width="0.6"/></svg></div>
        <div class="w-[21px] bg-[#777] border-r border-[#555] flex items-center justify-center"><span class="w-[8px] h-[8px] border border-[#333] rounded-[1px]"></span></div>
        <div class="w-[21px] bg-[#777] flex items-center justify-center"><span class="w-[7px] h-[7px] rounded-full border border-[#444]"></span></div>
        <div class="flex-1 flex items-center pl-[9px]"><span class="w-[8px] h-[8px] rounded-full bg-[#444]"></span></div>
      </div>
      <div class="h-[14px] flex bg-[#8c8c8c] font-['Liberation_Sans'] text-[#3a3a3a] font-bold text-[11px] leading-none">
        <div class="w-[64px] shrink-0 border-r border-[#666] flex items-center gap-[8px] pl-[10px]"><span class="w-[8px] h-[8px] rounded-full bg-[#aaa]"></span><span>Back</span></div>
        <div class="flex-1 flex items-center pl-[12px] gap-[9px]"><span>Next</span><span class="w-[8px] h-[8px] rounded-full bg-[#aaa]"></span></div>
      </div>
    </div>
  </div>
</div>

<!-- footer -->
<div class="h-[4px] shrink-0 bg-[#1c2c3c] flex"><div class="ml-[182px] w-[22px] bg-[#1a70c0]"></div></div>
<div class="flex-1 bg-black"></div>
</div>
</body></html>
